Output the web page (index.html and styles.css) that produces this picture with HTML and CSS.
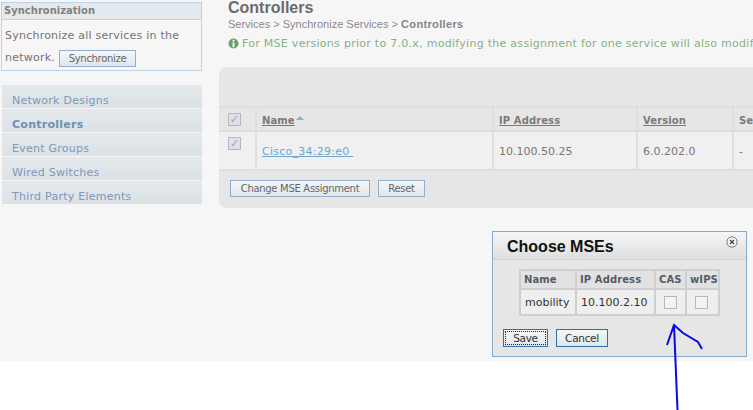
FILE: index.html
```html
<!DOCTYPE html>
<html lang="en">
<head>
<meta charset="utf-8">
<title>Controllers</title>
<link rel="stylesheet" href="styles.css">
</head>
<body>
<div class="page">
  <aside class="sidebar">
    <section class="sync">
      <h3 class="sync-title">Synchronization</h3>
      <div class="sync-body">
        <div class="sync-line">Synchronize all services in the</div>
        <div class="sync-line row-line"><span>network.</span><button class="btn sync-btn" type="button">Synchronize</button></div>
      </div>
    </section>
    <nav class="nav">
      <a class="nav-item">Network Designs</a>
      <a class="nav-item active">Controllers</a>
      <a class="nav-item">Event Groups</a>
      <a class="nav-item">Wired Switches</a>
      <a class="nav-item">Third Party Elements</a>
    </nav>
  </aside>
  <main class="main">
    <h1 class="title">Controllers</h1>
    <div class="crumbs">Services &gt; Synchronize Services &gt; <b>Controllers</b></div>
    <div class="notice">
      <svg class="info" viewBox="0 0 12 12" width="11" height="11"><circle cx="6" cy="6" r="5.5" fill="#6d9f6d"/><rect x="5" y="2" width="2" height="2" fill="#fff"/><rect x="5" y="5" width="2" height="5" fill="#fff"/></svg>
      <span>For MSE versions prior to 7.0.x, modifying the assignment for one service will also modify</span>
    </div>
    <div class="panel">
      <table class="grid">
        <tr class="head">
          <th class="c-check"><span class="check checked">&#10003;</span></th>
          <th class="c-name"><u>Name</u><svg class="sort" viewBox="0 0 8 4" width="8" height="4"><path d="M0 4 4 0l4 4z" fill="#8fb0c0"/></svg></th>
          <th class="c-ip"><u>IP Address</u></th>
          <th class="c-ver"><u>Version</u></th>
          <th class="c-last">Se</th>
        </tr>
        <tr class="row">
          <td class="c-check top"><span class="check checked">&#10003;</span></td>
          <td><a class="link">Cisco_34:29:e0&nbsp;</a></td>
          <td>10.100.50.25</td>
          <td>6.0.202.0</td>
          <td>-</td>
        </tr>
      </table>
      <div class="actions">
        <button class="btn wide" type="button">Change MSE Assignment</button>
        <button class="btn narrow" type="button">Reset</button>
      </div>
    </div>
  </main>
</div>
<section class="dialog">
  <header class="dialog-head">
    <h2>Choose MSEs</h2>
    <svg class="close" viewBox="0 0 12 12" width="12" height="12"><circle cx="6" cy="6" r="5.2" fill="#f4f4f4" stroke="#777"/><path d="M4 4l4 4M8 4l-4 4" stroke="#444" stroke-width="1.2"/></svg>
  </header>
  <div class="dialog-body">
    <table class="mse">
      <tr><th class="m1">Name</th><th class="m2">IP Address</th><th class="m3">CAS</th><th class="m4">wIPS</th></tr>
      <tr class="mrow"><td>mobility</td><td>10.100.2.10</td><td><span class="check"></span></td><td><span class="check"></span></td></tr>
    </table>
    <div class="dialog-actions">
      <button class="btn strong focus" type="button">Save</button>
      <button class="btn strong" type="button">Cancel</button>
    </div>
  </div>
</section>
<svg class="arrow" viewBox="0 0 753 410" width="753" height="410">
  <path d="M677.5 410 674 325M667 345 674 325 683 333 698 342 702 349" fill="none" stroke="#0a0ae6" stroke-width="2"/>
</svg>
</body>
</html>
```
FILE: styles.css
```css
* { box-sizing: border-box; }
html, body { margin: 0; height: 410px; overflow: hidden; background: #fff; }
body { position: relative; font: 11px "DejaVu Sans", Verdana, sans-serif; color: #666; }
.page {
  display: grid;
  grid-template-columns: 219px 534px;
  height: 361px;
  background: #f6f6f6;
  overflow: hidden;
}
.sidebar { padding: 2px 17px 0 1px; }
.sync { border: 1px solid #bed2e6; height: 69px; }
.sync-title {
  margin: 0;
  height: 17px;
  padding-left: 2px;
  font-size: 10px;
  line-height: 16px;
  font-weight: bold;
  color: #857f7c;
  background: #e4e9ed;
  border-bottom: 1px solid #bed2e6;
}
.sync-body { padding: 5px 3px 0 3px; letter-spacing: .23px; color: #7a6f74; }
.sync-line { height: 22px; line-height: 22px; white-space: nowrap; }
.row-line { display: flex; align-items: center; gap: 4px; }
.btn {
  font: 10px "DejaVu Sans", Verdana, sans-serif;
  letter-spacing: -.3px;
  color: #666;
  height: 17px;
  padding: 0;
  border: 1px solid #95afcb;
  background: linear-gradient(#f4f7f9, #dfe6ea);
}
.sync-btn { width: 77px; }
.wide { width: 140px; }
.narrow { width: 47px; }
.nav { margin: 14px 0 0 1px; display: flex; flex-direction: column; gap: 1px; }
.nav-item {
  height: 23px;
  padding: 9px 0 0 10px;
  line-height: 13px;
  letter-spacing: .25px;
  color: #7e97bb;
  background: linear-gradient(#e4e8eb, #dae2e6);
  overflow: hidden;
}
.nav-item.active { font-weight: bold; color: #6f8fb5; }
.main { min-width: 0; }
.title {
  margin: 0;
  font: bold 16px/15px "Liberation Sans", Arial, sans-serif;
  color: #6e6a6c;
  padding: 0 0 0 9px;
}
.crumbs {
  margin-top: 2px;
  padding-left: 9px;
  font: 11px/14px "Liberation Sans", Arial, sans-serif;
  color: #8a8a8a;
}
.crumbs b { letter-spacing: .35px; color: #858585; }
.notice {
  display: flex;
  align-items: center;
  gap: 3px;
  margin-top: 5px;
  padding-left: 9px;
  white-space: nowrap;
  height: 14px;
  color: #86b186;
  letter-spacing: .28px;
}
.info { flex: none; }
.panel {
  margin-top: 17px;
  height: 141px;
  width: 534px;
  padding-top: 39px;
  background: #e6e6e6;
  border-radius: 8px 0 0 8px;
  overflow: hidden;
}
.grid {
  width: 534px;
  table-layout: fixed;
  border-collapse: collapse;
  border-top: 2px solid #dedede;
  border-bottom: 2px solid #dedede;
}
.grid th, .grid td {
  border-left: 2px solid #dedede;
  padding: 0 0 0 5px;
  text-align: left;
  white-space: nowrap;
  overflow: hidden;
}
.grid th:first-child, .grid td:first-child { border-left: 0; padding-left: 9px; }
.c-check { width: 37px; }
.c-name { width: 237px; }
.c-ip { width: 144px; }
.c-ver { width: 96px; }
.head { height: 24px; }
.head th { font-weight: bold; color: #7a7a7a; font-size: 10px; letter-spacing: .1px; padding-top: 3px; }
.head th.c-check { padding-top: 0; }
.row { height: 39px; background: #f0f0f0; border-top: 2px solid #dedede; }
.row td { color: #777; padding-top: 1px; }
.top { vertical-align: top; padding-top: 4px !important; }
.check {
  display: inline-block;
  width: 13px;
  height: 13px;
  vertical-align: middle;
  border: 1px solid #b8b8b8;
  background: #f3f3f3;
  text-align: center;
  font-size: 11px;
  line-height: 11px;
  font-weight: bold;
}
.check.checked { color: #9aa7c8; background: #e0e0e8; }
.sort { margin-left: 1px; vertical-align: 4px; }
.link { color: #6ea5cf; text-decoration: underline; letter-spacing: .25px; }
.actions { display: flex; gap: 8px; padding: 9px 0 0 11px; }
.dialog {
  position: absolute;
  left: 492px;
  top: 231px;
  width: 255px;
  height: 126px;
  border: 1px solid #88a9c9;
  background: #e6e6e6;
}
.dialog-head {
  height: 28px;
  background: linear-gradient(#f6f6f6, #dedede);
  border-bottom: 1px solid #d2d2d2;
  position: relative;
}
.dialog-head h2 {
  margin: 0;
  padding: 6px 0 0 14px;
  font: bold 16px/18px "Liberation Sans", Arial, sans-serif;
  color: #111;
}
.close { position: absolute; right: 8px; top: 4px; }
.dialog-body { padding: 9px 0 0 10px; }
.mse {
  margin-left: 16px;
  width: 201px;
  table-layout: fixed;
  border-collapse: collapse;
  border: 2px solid #cfcfcf;
}
.mse th, .mse td { border: 1px solid #cfcfcf; border-width: 0 0 0 2px; text-align: left; padding: 0 0 0 3px; white-space: nowrap; }
.mse th { height: 19px; color: #555c66; font-size: 10px; letter-spacing: .1px; font-weight: bold; background: #e2e2e2; }
.mrow { border-top: 2px solid #cfcfcf; background: #efefef; height: 26px; }
.mrow td { color: #333; padding-left: 4px; font-size: 11px; }
.mrow .check { margin-left: 4px; }
.m1 { width: 56px; }
.m2 { width: 79px; }
.m3 { width: 31px; }
.dialog-actions { display: flex; gap: 8px; margin-top: 13px; }
.strong { border-color: #2e70a8; color: #333; height: 18px; width: 52px; font-size: 10.5px; }
.focus { width: 45px; outline: 1px dotted #222; outline-offset: -3px; }
.arrow { position: absolute; left: 0; top: 0; pointer-events: none; }
```
